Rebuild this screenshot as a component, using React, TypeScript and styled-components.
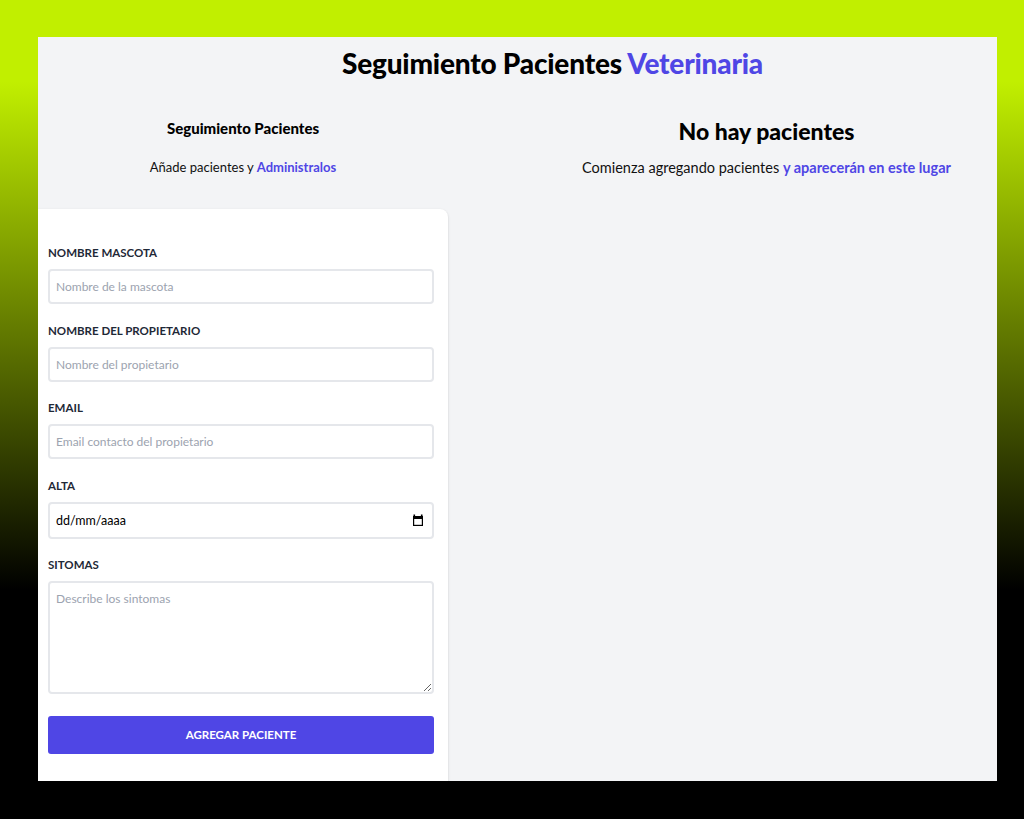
import React from "react";
import styled, { createGlobalStyle } from "styled-components";

const GlobalStyle = createGlobalStyle`
  html, body { margin: 0; padding: 0; }
  body {
    height: 819px;
    overflow: hidden;
    background: linear-gradient(to bottom, #c1ef00 0%, #c1ef00 10%, #000000 72%, #000000 100%);
    font-family: Lato, "Noto Sans", sans-serif;
  }
  * { box-sizing: border-box; }
`;

const Frame = styled.div`
  padding: 37px 27px 38px 38px;
  height: 819px;
`;

const Panel = styled.div`
  background: #f3f4f6;
  height: 744px;
  display: flex;
  flex-direction: column;
  overflow: hidden;
`;

const Title = styled.h1`
  margin: 0;
  padding: 9px 0 0 70px;
  text-align: center;
  font-size: 28px;
  line-height: 34px;
  font-weight: 900;
  color: #000;
  letter-spacing: -0.2px;
`;

const Accent = styled.span`
  color: #4f46e5;
`;

const Columns = styled.div`
  display: flex;
  flex: 1;
  margin-top: 36px;
`;

const LeftCol = styled.div`
  width: 410px;
  display: flex;
  flex-direction: column;
`;

const RightCol = styled.div`
  flex: 1;
  padding-left: 88px;
  display: flex;
  flex-direction: column;
  align-items: center;
`;

const SubTitle = styled.h2<{ $big?: boolean }>`
  margin: ${(p) => (p.$big ? "0" : "2px 0 0")};
  text-align: center;
  font-size: ${(p) => (p.$big ? "23px" : "15px")};
  line-height: ${(p) => (p.$big ? "30px" : "20px")};
  font-weight: 900;
  color: #000;
`;

const Lead = styled.p<{ $big?: boolean }>`
  margin: ${(p) => (p.$big ? "12px 0 0" : "19px 0 0")};
  text-align: center;
  font-size: ${(p) => (p.$big ? "14.5px" : "13px")};
  line-height: 20px;
  color: #111;
`;

const Strong = styled.span`
  color: #4f46e5;
  font-weight: 700;
`;

const Card = styled.form`
  margin-top: 32px;
  flex: 1;
  background: #fff;
  border-radius: 0 8px 0 0;
  box-shadow: 0 1px 3px rgba(0, 0, 0, 0.12), 0 1px 2px rgba(0, 0, 0, 0.06);
  padding: 37px 14px 0 10px;
  display: flex;
  flex-direction: column;
`;

const Field = styled.div`
  display: flex;
  flex-direction: column;
  margin-bottom: 19.5px;
`;

const Label = styled.label`
  font-size: 11.5px;
  line-height: 14px;
  font-weight: 700;
  color: #1f2937;
  text-transform: uppercase;
  margin-bottom: 9px;
`;

const Input = styled.input`
  height: 35px;
  border: 2px solid #e5e7eb;
  border-radius: 4px;
  padding: 0 6px;
  font-family: inherit;
  font-size: 12px;
  color: #111;
  background: #fff;
  outline: none;
  &::placeholder { color: #9ca3af; }
`;

const DateBox = styled.div`
  height: 37px;
  border: 2px solid #e5e7eb;
  border-radius: 4px;
  background: #fff;
  display: flex;
  align-items: center;
  padding: 0 8px 0 6px;
`;

const DateText = styled.input`
  flex: 1;
  border: none;
  outline: none;
  padding: 0;
  font-family: inherit;
  font-size: 12.5px;
  color: #000;
  background: transparent;
  &::placeholder { color: #000; }
`;

const CalendarIcon = styled.svg`
  width: 12px;
  height: 12px;
  flex: none;
`;

const TextArea = styled.textarea`
  height: 113px;
  border: 2px solid #e5e7eb;
  border-radius: 4px;
  padding: 8px 6px;
  font-family: inherit;
  font-size: 12px;
  resize: vertical;
  outline: none;
  &::placeholder { color: #9ca3af; }
`;

const Button = styled.button`
  margin-top: 2px;
  height: 38px;
  border: none;
  border-radius: 3px;
  background: #4f46e5;
  color: #fff;
  font-family: inherit;
  font-size: 11.5px;
  font-weight: 700;
  text-transform: uppercase;
  cursor: pointer;
`;

export default function App() {
  return (
    <>
      <GlobalStyle />
      <Frame>
        <Panel>
          <Title>
            Seguimiento Pacientes <Accent>Veterinaria</Accent>
          </Title>
          <Columns>
            <LeftCol>
              <SubTitle>Seguimiento Pacientes</SubTitle>
              <Lead>
                Añade pacientes y <Strong>Administralos</Strong>
              </Lead>
              <Card onSubmit={(e) => e.preventDefault()}>
                <Field>
                  <Label htmlFor="mascota">Nombre Mascota</Label>
                  <Input id="mascota" type="text" placeholder="Nombre de la mascota" />
                </Field>
                <Field>
                  <Label htmlFor="propietario">Nombre del Propietario</Label>
                  <Input id="propietario" type="text" placeholder="Nombre del propietario" />
                </Field>
                <Field>
                  <Label htmlFor="email">Email</Label>
                  <Input id="email" type="email" placeholder="Email contacto del propietario" />
                </Field>
                <Field>
                  <Label htmlFor="alta">Alta</Label>
                  <DateBox>
                    <DateText id="alta" type="text" placeholder="dd/mm/aaaa" />
                    <CalendarIcon viewBox="0 0 12 12" aria-hidden="true">
                      <rect x="1.5" y="0.5" width="1.6" height="2.5" fill="#000" />
                      <rect x="8.9" y="0.5" width="1.6" height="2.5" fill="#000" />
                      <rect x="1" y="2" width="10" height="3" fill="#000" />
                      <rect x="1.6" y="2.6" width="8.8" height="8.8" fill="none" stroke="#000" strokeWidth="1.2" />
                    </CalendarIcon>
                  </DateBox>
                </Field>
                <Field>
                  <Label htmlFor="sintomas">Sitomas</Label>
                  <TextArea id="sintomas" placeholder="Describe los sintomas" />
                </Field>
                <Button type="submit">Agregar Paciente</Button>
              </Card>
            </LeftCol>
            <RightCol>
              <SubTitle $big>No hay pacientes</SubTitle>
              <Lead $big>
                Comienza agregando pacientes <Strong>y aparecerán en este lugar</Strong>
              </Lead>
            </RightCol>
          </Columns>
        </Panel>
      </Frame>
    </>
  );
}
